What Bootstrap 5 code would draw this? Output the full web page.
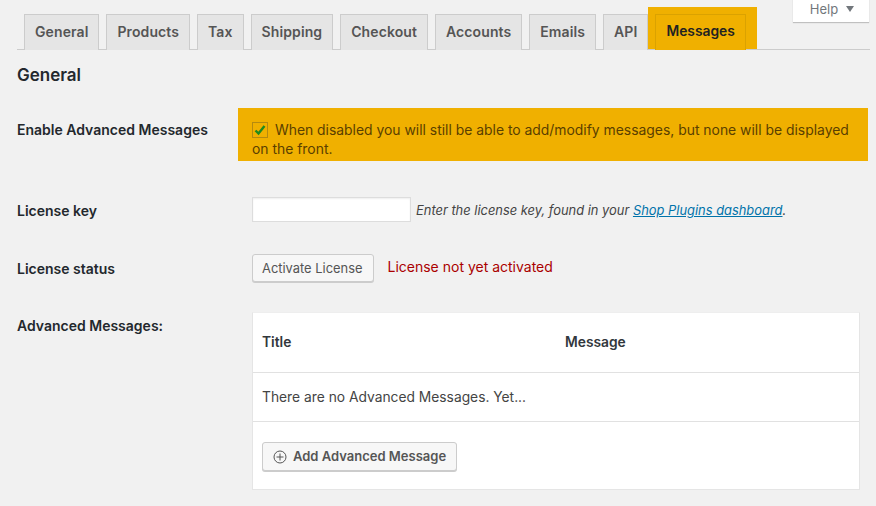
<!DOCTYPE html>
<html lang="en">
<head>
<meta charset="utf-8">
<title>Messages settings</title>
<link href="https://cdn.jsdelivr.net/npm/bootstrap@5.3.0/dist/css/bootstrap.min.css" rel="stylesheet">
<style>
html,body{height:506px;overflow:hidden}
body{background:#f1f1f1;font-family:Inter,"Liberation Sans",sans-serif;color:#444;font-size:13.4px;line-height:19px;position:relative}
.page-wrap{padding:0 6px 0 17px}
.help-tab{position:absolute;top:-1px;right:7px;width:76px;height:23px;background:#fff;box-shadow:0 1px 1px rgba(0,0,0,.2);color:#72777c;display:flex;align-items:center;justify-content:center;gap:8px;font-size:13px;padding:0 0 3px 2px}
.help-arrow{width:0;height:0;border-left:4px solid transparent;border-right:4px solid transparent;border-top:6px solid #72777c}
.tabbar{height:50px;padding:14px 0 0 7px;border-bottom:1px solid #ccc;gap:7px}
.wc-tab{height:36px;padding:0 10px 2px;background:#e5e5e5;border:1px solid #ccc;border-bottom:0;color:#555;font-weight:600;font-size:14px;display:flex;align-items:center;margin-bottom:-1px;letter-spacing:.1px}
.wc-wrap-active{background:#f0b000;height:43px;margin-top:-7px;padding:7px 11px 0 7px;margin-left:-7px;margin-bottom:-1px;border-bottom:1px solid #ccc}
.wc-tab-active{background:#f0b000;border-color:#dba200;color:#222;height:36px;margin:0;font-size:13.8px;letter-spacing:0}
.sect-title{font-size:17px;font-weight:600;color:#23282d;margin:14px 0 0;line-height:22px}
.lbl{width:221px;flex:none;font-weight:600;color:#23282d;font-size:14px}
.hl-box{background:#f0b000;width:630px;height:53px;padding:13px 14px 0;color:#5a3f00;line-height:19px;font-size:13.9px}
.chk{display:inline-block;width:16px;height:16px;border:1px solid #b58a10;vertical-align:-3px;margin-right:7px;position:relative}
.chk svg{position:absolute;left:0;top:0}
.ml14{margin-left:14px}
.key-input{width:159px;height:25px;background:#fff;border:1px solid #ddd;box-shadow:inset 0 1px 2px rgba(0,0,0,.07);flex:none}
.hint{font-style:italic;font-size:12.9px;margin-left:5px;padding-top:2px;color:#444}
.hint a{color:#0073aa}
.wp-btn{background:#f7f7f7;border:1px solid #ccc;border-radius:3px;box-shadow:0 1px 0 #ccc;color:#555;font-size:12.9px;height:28px;padding:0 11px 0 9px;display:inline-flex;align-items:center}
.err{color:#a00;margin-left:13px;font-size:14px;padding-bottom:4px}
.msg-box{width:608px;height:178px;margin-left:14px;background:#fff;border:1px solid #e5e5e5;border-top-color:#eee}
.mb-head{height:60px;border-bottom:1px solid #e1e1e1;padding:0 10px 0 9px;font-weight:600;color:#32373c;font-size:13.8px}
.mb-head span:first-child{width:303px}
.mb-row{height:49px;border-bottom:1px solid #e1e1e1;padding:0 9px;color:#444;font-size:13.8px}
.mb-foot{padding:20px 9px 0}
.add-btn{height:29px;font-weight:600;font-size:13px;gap:6px;padding:0 10px}
.r1{margin-top:22px}.r2{margin-top:36px}.r3{margin-top:32px}.r4{margin-top:30px}
.lbl-top1{padding-top:12px}.lbl-top2{padding-top:1px}.lbl-top4{padding-top:4px}
</style>
</head>
<body>
<div class="help-tab"><span>Help</span><span class="help-arrow"></span></div>
<div class="page-wrap">
  <nav class="tabbar d-flex">
    <a class="wc-tab text-decoration-none">General</a>
    <a class="wc-tab text-decoration-none">Products</a>
    <a class="wc-tab text-decoration-none">Tax</a>
    <a class="wc-tab text-decoration-none">Shipping</a>
    <a class="wc-tab text-decoration-none">Checkout</a>
    <a class="wc-tab text-decoration-none">Accounts</a>
    <a class="wc-tab text-decoration-none">Emails</a>
    <a class="wc-tab text-decoration-none">API</a>
    <div class="wc-wrap-active"><a class="wc-tab wc-tab-active text-decoration-none">Messages</a></div>
  </nav>
  <h2 class="sect-title">General</h2>
  <div class="d-flex r1">
    <div class="lbl lbl-top1">Enable Advanced Messages</div>
    <div class="hl-box"><span class="chk"><svg width="14" height="14" viewBox="0 0 14 14"><path d="M2.5 7.5 5.5 10.5 11.5 3" fill="none" stroke="#1e8a1e" stroke-width="2.4"/></svg></span>When disabled you will still be able to add/modify messages, but none will be displayed on the front.</div>
  </div>
  <div class="d-flex align-items-center r2">
    <div class="lbl lbl-top2">License key</div>
    <div class="d-flex align-items-center ml14">
      <div class="key-input"></div>
      <span class="hint">Enter the license key, found in your <a href="#">Shop Plugins dashboard</a>.</span>
    </div>
  </div>
  <div class="d-flex align-items-center r3">
    <div class="lbl">License status</div>
    <div class="d-flex align-items-center ml14">
      <span class="wp-btn">Activate License</span>
      <span class="err">License not yet activated</span>
    </div>
  </div>
  <div class="d-flex r4">
    <div class="lbl lbl-top4">Advanced Messages:</div>
    <div class="msg-box">
      <div class="mb-head d-flex align-items-center"><span>Title</span><span>Message</span></div>
      <div class="mb-row d-flex align-items-center">There are no Advanced Messages. Yet...</div>
      <div class="mb-foot">
        <span class="wp-btn add-btn"><svg width="14" height="14" viewBox="0 0 14 14"><circle cx="7" cy="7" r="6" fill="none" stroke="#555"/><path d="M7 3.5v7M3.5 7h7" stroke="#555"/></svg>Add Advanced Message</span>
      </div>
    </div>
  </div>
</div>
</body>
</html>
